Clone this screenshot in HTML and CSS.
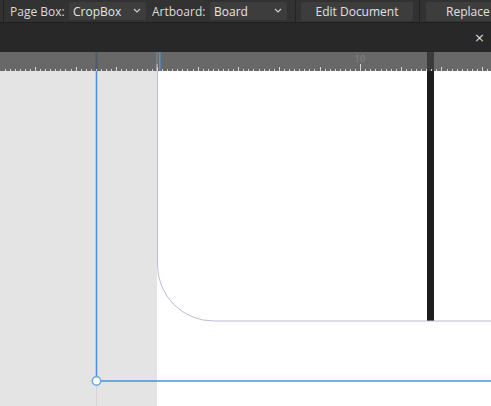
FILE: index.html
```html
<!DOCTYPE html>
<html>
<head>
<meta charset="utf-8">
<link rel="stylesheet" href="styles.css">
</head>
<body>
<div class="app">
  <div class="toolbar">
    <span class="sep sep-first"></span>
    <span class="label label-page">Page Box:</span>
    <div class="select sel-crop"><span>CropBox</span><svg class="chev" width="8" height="5" viewBox="0 0 8 5"><path d="M1 1 L4 4 L7 1" fill="none" stroke="#cfcfcf" stroke-width="1.1"/></svg></div>
    <span class="label label-art">Artboard:</span>
    <div class="select sel-board"><span>Board</span><svg class="chev" width="8" height="5" viewBox="0 0 8 5"><path d="M1 1 L4 4 L7 1" fill="none" stroke="#cfcfcf" stroke-width="1.1"/></svg></div>
    <span class="sep sep-a"></span>
    <div class="btn btn-edit">Edit Document</div>
    <span class="sep sep-b"></span>
    <div class="btn btn-replace">Replace</div>
  </div>
  <div class="panelbar"><span class="close">×</span></div>
  <div class="ruler">
    <svg width="491" height="19" viewBox="0 0 491 19">
      <rect x="0" y="0" width="491" height="19" fill="#686868"/>
      <rect x="95.5" y="0" width="2" height="19" fill="#4f5b69"/>
      <rect x="156" y="0" width="2" height="19" fill="#7a7a7a"/>
      <rect x="156.5" y="12" width="1" height="7" fill="#bdbdbd"/>
      <rect x="159" y="0" width="1.5" height="19" fill="#3d9be9"/>
      <rect x="427" y="0" width="7" height="19" fill="#3b3b3b"/>
      <g id="ticks" fill="#d6d6d6"></g>
      <text x="360" y="10" font-family="Noto Sans, sans-serif" font-size="9" fill="#858585" text-anchor="middle">10</text>
    </svg>
  </div>
  <div class="canvas">
    <div class="pasteboard"></div>
    <div class="page"></div>
    <svg class="art" width="491" height="335" viewBox="0 0 491 335">
      <rect x="427" y="0" width="7" height="250" fill="#1e1e1e"/>
      <path d="M157.5 0 V194 A56 56 0 0 0 213.5 250 H491" fill="none" stroke="#b9b9dc" stroke-width="1"/>
      <line x1="96.5" y1="0" x2="96.5" y2="310" stroke="#4a90e2" stroke-width="1.5"/>
      <line x1="96.5" y1="310" x2="96.5" y2="335" stroke="#d4d4d4" stroke-width="1"/>
      <line x1="96" y1="310" x2="491" y2="310" stroke="#4a90e2" stroke-width="1.5"/>
      <circle cx="96.5" cy="310" r="4.2" fill="#ffffff" stroke="#6aa6e8" stroke-width="1.5"/>
    </svg>
  </div>
</div>
<script>
  var g = document.getElementById('ticks');
  var step = 40.65 / 8;
  var x0 = 35 - step * 7;
  var out = '';
  for (var i = 0; i < 110; i++) {
    var x = x0 + i * step;
    if (x > 491) break;
    var h = 2;
    if (i % 8 === 7) h = 4;
    if (Math.abs(x - 359) < 1.5) h = 7;
    if (x < 0) continue;
    out += '<rect x="' + Math.round(x) + '" y="' + (19 - h) + '" width="1" height="' + h + '"/>';
  }
  g.innerHTML = out;
</script>
</body>
</html>
```

FILE: styles.css
```css
html, body {
  margin: 0;
  padding: 0;
  background: #e4e4e4;
}
.app {
  width: 491px;
  height: 406px;
  overflow: hidden;
  display: flex;
  flex-direction: column;
  font-family: "Open Sans", "Noto Sans", sans-serif;
}
.toolbar {
  height: 22px;
  background: #323232;
  border-bottom: 1px solid #1f1f1f;
  display: flex;
  align-items: center;
  white-space: nowrap;
  overflow: hidden;
  color: #dcdcdc;
  font-size: 12px;
}
.sep {
  width: 1px;
  height: 22px;
  background: #232323;
  flex: none;
}
.sep-first { margin-left: 3px; }
.sep-a { margin-left: 8px; }
.sep-b { margin-left: 6px; }
.label {
  flex: none;
  overflow: visible;
}
.label-page { margin-left: 6px; width: 53px; }
.label-art { margin-left: 6px; width: 58px; }
.select {
  height: 18px;
  background: #3d3d3d;
  border-radius: 2px;
  display: flex;
  align-items: center;
  justify-content: space-between;
  padding: 0 5px 0 4px;
  box-sizing: border-box;
  color: #e6e6e6;
  font-size: 12px;
  flex: none;
  width: 77px;
}
.sel-crop { margin-left: 6px; }
.chev { margin-bottom: 1px; }
.btn {
  height: 19px;
  background: #3d3d3d;
  border-radius: 2px;
  display: flex;
  align-items: center;
  box-sizing: border-box;
  color: #e0e0e0;
  font-size: 12px;
  flex: none;
}
.btn-edit { width: 112px; margin-left: 5px; justify-content: center; }
.btn-replace { width: 80px; margin-left: 6px; padding-left: 20px; }
.panelbar {
  height: 29px;
  background: #282828;
  display: flex;
  align-items: center;
  justify-content: flex-end;
  flex: none;
}
.close {
  color: #dcdcdc;
  font-family: "DejaVu Sans", sans-serif;
  font-size: 13px;
  margin-right: 6px;
  margin-top: -1px;
}
.ruler {
  height: 19px;
  flex: none;
  line-height: 0;
}
.canvas {
  position: relative;
  flex: 1;
  display: flex;
}
.pasteboard {
  width: 157px;
  background: #e4e4e4;
}
.page {
  flex: 1;
  background: #ffffff;
}
.art {
  position: absolute;
  left: 0;
  top: 0;
}
```
